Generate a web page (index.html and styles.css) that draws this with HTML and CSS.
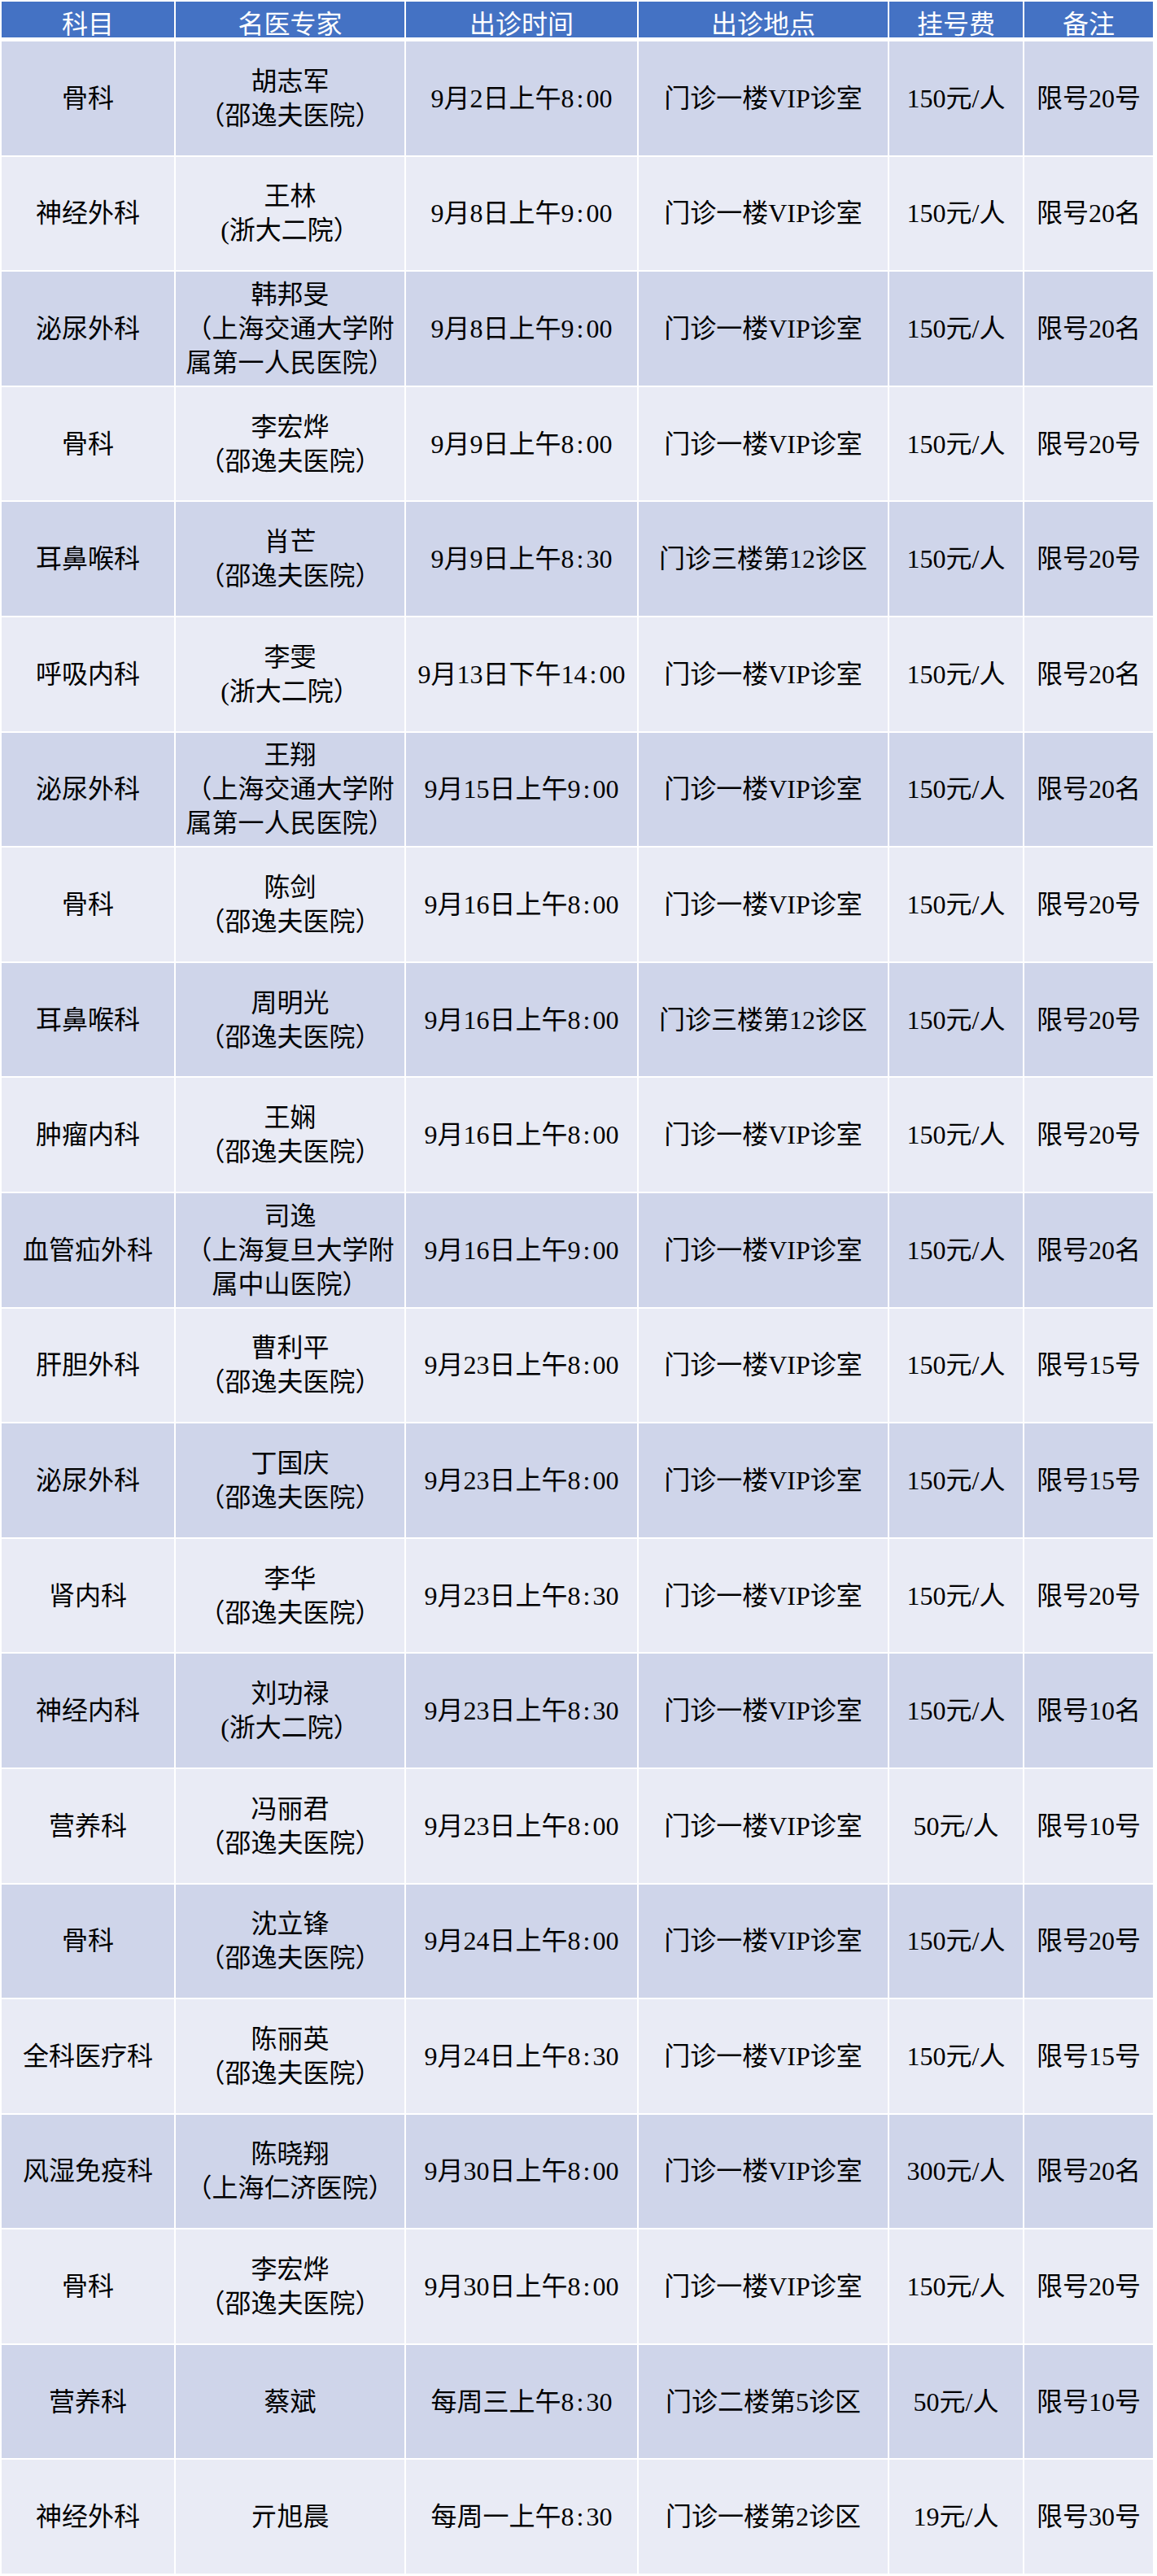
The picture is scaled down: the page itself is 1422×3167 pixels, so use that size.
FILE: index.html
```html
<!DOCTYPE html>
<html lang="zh-CN">
<head>
<meta charset="utf-8">
<title>名医专家出诊表</title>
<link rel="stylesheet" href="styles.css">
</head>
<body>
<div class="table">
  <div class="row head">
    <div class="cell">科目</div>
    <div class="cell">名医专家</div>
    <div class="cell">出诊时间</div>
    <div class="cell">出诊地点</div>
    <div class="cell">挂号费</div>
    <div class="cell">备注</div>
  </div>

  <div class="row odd">
    <div class="cell">骨科</div>
    <div class="cell">胡志军<br>（邵逸夫医院）</div>
    <div class="cell time">9月2日上午8<span class="colon">:</span>00</div>
    <div class="cell">门诊一楼VIP诊室</div>
    <div class="cell">150元/人</div>
    <div class="cell">限号20号</div>
  </div>
  <div class="row even">
    <div class="cell">神经外科</div>
    <div class="cell">王林<br>(浙大二院）</div>
    <div class="cell time">9月8日上午9<span class="colon">:</span>00</div>
    <div class="cell">门诊一楼VIP诊室</div>
    <div class="cell">150元/人</div>
    <div class="cell">限号20名</div>
  </div>
  <div class="row odd">
    <div class="cell">泌尿外科</div>
    <div class="cell">韩邦旻<br>（上海交通大学附<br>属第一人民医院）</div>
    <div class="cell time">9月8日上午9<span class="colon">:</span>00</div>
    <div class="cell">门诊一楼VIP诊室</div>
    <div class="cell">150元/人</div>
    <div class="cell">限号20名</div>
  </div>
  <div class="row even">
    <div class="cell">骨科</div>
    <div class="cell">李宏烨<br>（邵逸夫医院）</div>
    <div class="cell time">9月9日上午8<span class="colon">:</span>00</div>
    <div class="cell">门诊一楼VIP诊室</div>
    <div class="cell">150元/人</div>
    <div class="cell">限号20号</div>
  </div>
  <div class="row odd">
    <div class="cell">耳鼻喉科</div>
    <div class="cell">肖芒<br>（邵逸夫医院）</div>
    <div class="cell time">9月9日上午8<span class="colon">:</span>30</div>
    <div class="cell">门诊三楼第12诊区</div>
    <div class="cell">150元/人</div>
    <div class="cell">限号20号</div>
  </div>
  <div class="row even">
    <div class="cell">呼吸内科</div>
    <div class="cell">李雯<br>(浙大二院）</div>
    <div class="cell time">9月13日下午14<span class="colon">:</span>00</div>
    <div class="cell">门诊一楼VIP诊室</div>
    <div class="cell">150元/人</div>
    <div class="cell">限号20名</div>
  </div>
  <div class="row odd">
    <div class="cell">泌尿外科</div>
    <div class="cell">王翔<br>（上海交通大学附<br>属第一人民医院）</div>
    <div class="cell time">9月15日上午9<span class="colon">:</span>00</div>
    <div class="cell">门诊一楼VIP诊室</div>
    <div class="cell">150元/人</div>
    <div class="cell">限号20名</div>
  </div>
  <div class="row even">
    <div class="cell">骨科</div>
    <div class="cell">陈剑<br>（邵逸夫医院）</div>
    <div class="cell time">9月16日上午8<span class="colon">:</span>00</div>
    <div class="cell">门诊一楼VIP诊室</div>
    <div class="cell">150元/人</div>
    <div class="cell">限号20号</div>
  </div>
  <div class="row odd">
    <div class="cell">耳鼻喉科</div>
    <div class="cell">周明光<br>（邵逸夫医院）</div>
    <div class="cell time">9月16日上午8<span class="colon">:</span>00</div>
    <div class="cell">门诊三楼第12诊区</div>
    <div class="cell">150元/人</div>
    <div class="cell">限号20号</div>
  </div>
  <div class="row even">
    <div class="cell">肿瘤内科</div>
    <div class="cell">王娴<br>（邵逸夫医院）</div>
    <div class="cell time">9月16日上午8<span class="colon">:</span>00</div>
    <div class="cell">门诊一楼VIP诊室</div>
    <div class="cell">150元/人</div>
    <div class="cell">限号20号</div>
  </div>
  <div class="row odd">
    <div class="cell">血管疝外科</div>
    <div class="cell">司逸<br>（上海复旦大学附<br>属中山医院）</div>
    <div class="cell time">9月16日上午9<span class="colon">:</span>00</div>
    <div class="cell">门诊一楼VIP诊室</div>
    <div class="cell">150元/人</div>
    <div class="cell">限号20名</div>
  </div>
  <div class="row even">
    <div class="cell">肝胆外科</div>
    <div class="cell">曹利平<br>（邵逸夫医院）</div>
    <div class="cell time">9月23日上午8<span class="colon">:</span>00</div>
    <div class="cell">门诊一楼VIP诊室</div>
    <div class="cell">150元/人</div>
    <div class="cell">限号15号</div>
  </div>
  <div class="row odd">
    <div class="cell">泌尿外科</div>
    <div class="cell">丁国庆<br>（邵逸夫医院）</div>
    <div class="cell time">9月23日上午8<span class="colon">:</span>00</div>
    <div class="cell">门诊一楼VIP诊室</div>
    <div class="cell">150元/人</div>
    <div class="cell">限号15号</div>
  </div>
  <div class="row even">
    <div class="cell">肾内科</div>
    <div class="cell">李华<br>（邵逸夫医院）</div>
    <div class="cell time">9月23日上午8<span class="colon">:</span>30</div>
    <div class="cell">门诊一楼VIP诊室</div>
    <div class="cell">150元/人</div>
    <div class="cell">限号20号</div>
  </div>
  <div class="row odd">
    <div class="cell">神经内科</div>
    <div class="cell">刘功禄<br>(浙大二院）</div>
    <div class="cell time">9月23日上午8<span class="colon">:</span>30</div>
    <div class="cell">门诊一楼VIP诊室</div>
    <div class="cell">150元/人</div>
    <div class="cell">限号10名</div>
  </div>
  <div class="row even">
    <div class="cell">营养科</div>
    <div class="cell">冯丽君<br>（邵逸夫医院）</div>
    <div class="cell time">9月23日上午8<span class="colon">:</span>00</div>
    <div class="cell">门诊一楼VIP诊室</div>
    <div class="cell">50元/人</div>
    <div class="cell">限号10号</div>
  </div>
  <div class="row odd">
    <div class="cell">骨科</div>
    <div class="cell">沈立锋<br>（邵逸夫医院）</div>
    <div class="cell time">9月24日上午8<span class="colon">:</span>00</div>
    <div class="cell">门诊一楼VIP诊室</div>
    <div class="cell">150元/人</div>
    <div class="cell">限号20号</div>
  </div>
  <div class="row even">
    <div class="cell">全科医疗科</div>
    <div class="cell">陈丽英<br>（邵逸夫医院）</div>
    <div class="cell time">9月24日上午8<span class="colon">:</span>30</div>
    <div class="cell">门诊一楼VIP诊室</div>
    <div class="cell">150元/人</div>
    <div class="cell">限号15号</div>
  </div>
  <div class="row odd">
    <div class="cell">风湿免疫科</div>
    <div class="cell">陈晓翔<br>（上海仁济医院）</div>
    <div class="cell time">9月30日上午8<span class="colon">:</span>00</div>
    <div class="cell">门诊一楼VIP诊室</div>
    <div class="cell">300元/人</div>
    <div class="cell">限号20名</div>
  </div>
  <div class="row even">
    <div class="cell">骨科</div>
    <div class="cell">李宏烨<br>（邵逸夫医院）</div>
    <div class="cell time">9月30日上午8<span class="colon">:</span>00</div>
    <div class="cell">门诊一楼VIP诊室</div>
    <div class="cell">150元/人</div>
    <div class="cell">限号20号</div>
  </div>
  <div class="row odd">
    <div class="cell">营养科</div>
    <div class="cell">蔡斌</div>
    <div class="cell time">每周三上午8<span class="colon">:</span>30</div>
    <div class="cell">门诊二楼第5诊区</div>
    <div class="cell">50元/人</div>
    <div class="cell">限号10号</div>
  </div>
  <div class="row even">
    <div class="cell">神经外科</div>
    <div class="cell">亓旭晨</div>
    <div class="cell time">每周一上午8<span class="colon">:</span>30</div>
    <div class="cell">门诊一楼第2诊区</div>
    <div class="cell">19元/人</div>
    <div class="cell">限号30号</div>
  </div>
</div>
</body>
</html>
```

FILE: styles.css
```css
html, body {
  margin: 0;
  padding: 0;
  background: #ffffff;
}

.table {
  display: flex;
  flex-direction: column;
  gap: 2px;
  padding: 2px 0 0 2px;
  width: 1415px;
}

.row {
  display: grid;
  grid-template-columns: 212px 281px 284px 306px 164px 158px;
  column-gap: 2px;
  height: 139.6px;
}

.cell {
  display: flex;
  align-items: center;
  justify-content: center;
  text-align: center;
  white-space: nowrap;
  font-family: "Liberation Serif", "Noto Sans CJK SC", serif;
  font-size: 32px;
  line-height: 42px;
  color: #000000;
}

.head {
  height: 44px;
  margin-bottom: 3px;
}

.head .cell {
  background: #4472c4;
  color: #ffffff;
  font-family: "Noto Sans CJK SC", sans-serif;
  font-size: 32px;
  line-height: 38px;
  padding-top: 6px;
  box-sizing: border-box;
}

.odd .cell {
  background: #cfd5ea;
}

.even .cell {
  background: #e9ebf5;
}

.time .colon {
  padding: 0 3px;
}
```
